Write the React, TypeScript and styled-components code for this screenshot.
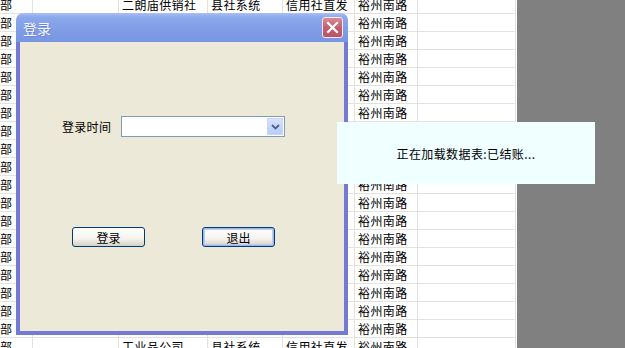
import styled, { createGlobalStyle } from 'styled-components';

const GlobalStyle = createGlobalStyle`
  html, body {
    margin: 0;
    padding: 0;
    overflow: hidden;
  }
  body {
    font-family: 'SimSun', 'Noto Sans CJK SC', sans-serif;
    font-size: 12px;
    color: #000;
  }
`;

const columns = [33, 86, 89, 75, 72, 63, 98];

// rows hidden behind the dialog keep only the visible columns
const hiddenRow = (street: string) => ['部', '', '', '', '', street, ''];

const rows: string[][] = [
  ['部', '', '二朗庙供销社', '县社系统', '信用社直发', '裕州南路', ''],
  ...Array.from({ length: 18 }, (_, i) => hiddenRow(i >= 6 && i <= 8 ? '' : '裕州南路')),
  ['部', '', '工业品公司', '县社系统', '信用社直发', '裕州南路', ''],
];

export default function App() {
  return (
    <>
      <GlobalStyle />
      <Screen>
        <Sheet>
          {rows.map((row, i) => (
            <Row key={i}>
              {row.map((text, j) => (
                <Cell key={j} first={j === 0}>
                  {text}
                </Cell>
              ))}
            </Row>
          ))}
        </Sheet>

        {/* Login dialog */}
        <Dialog>
          <TitleBar>
            <Title>登录</Title>
            <CloseButton>
              <svg width="13" height="13" viewBox="0 0 13 13">
                <path d="M2 2 L11 11 M11 2 L2 11" stroke="#fff" strokeWidth="2.2" strokeLinecap="square" />
              </svg>
            </CloseButton>
          </TitleBar>
          <Body>
            <FieldRow>
              <Label>登录时间</Label>
              <Combo>
                <ComboArrow>
                  <svg width="9" height="6" viewBox="0 0 9 6">
                    <path d="M1 1 L4.5 4.5 L8 1" stroke="#4d6185" strokeWidth="1.8" fill="none" />
                  </svg>
                </ComboArrow>
              </Combo>
            </FieldRow>
            <ButtonRow>
              <Button>登录</Button>
              <Button focused>退出</Button>
            </ButtonRow>
          </Body>
        </Dialog>

        {/* Loading notice */}
        <Loading>正在加载数据表:已结账...</Loading>
      </Screen>
    </>
  );
}

const Screen = styled.div`
  position: relative;
  width: 625px;
  height: 348px;
  display: flex;
  background: #808080;
  overflow: hidden;
`;

const Sheet = styled.div`
  width: 517px;
  height: 348px;
  background: #fff;
  overflow: hidden;
  display: flex;
  flex-direction: column;
`;

const Row = styled.div`
  display: grid;
  grid-template-columns: ${columns.map((c) => `${c}px`).join(' ')};
  height: 18px;
  flex: none;
  &:first-child {
    margin-top: -4px;
  }
`;

const Cell = styled.div<{ first: boolean }>`
  box-sizing: border-box;
  height: 18px;
  line-height: 17px;
  padding-left: ${(p) => (p.first ? '0' : '3px')};
  border-right: 1px solid #e4e2dc;
  border-bottom: 1px solid #e4e2dc;
  white-space: nowrap;
  overflow: hidden;
  font-size: 12px;
  letter-spacing: 0.4px;
`;

const Dialog = styled.div`
  position: absolute;
  left: 16px;
  top: 13px;
  width: 332px;
  height: 322px;
  display: flex;
  flex-direction: column;
`;

const TitleBar = styled.div`
  height: 29px;
  flex: none;
  display: flex;
  align-items: center;
  justify-content: space-between;
  padding: 0 5px 0 7px;
  border-radius: 7px 7px 0 0;
  background: linear-gradient(#a9c0f4 0%, #8ca8ec 15%, #7f9ce6 60%, #7896e2 100%);
`;

const Title = styled.span`
  color: #f4f7ff;
  font-size: 14px;
  text-shadow: 1px 1px 0 #6f86c9;
`;

const CloseButton = styled.div`
  width: 19px;
  height: 19px;
  display: flex;
  align-items: center;
  justify-content: center;
  border: 1px solid #f3e9ef;
  border-radius: 3px;
  background: linear-gradient(#d98b96, #c55f70 50%, #b95266);
`;

const Body = styled.div`
  flex: 1;
  background: #ece9d8;
  border: 4px solid #7379d4;
  border-top: none;
  display: flex;
  flex-direction: column;
  padding: 74px 0 0 0;
`;

const FieldRow = styled.div`
  display: flex;
  align-items: center;
  padding-left: 42px;
  height: 21px;
`;

const Label = styled.span`
  width: 59px;
  font-size: 12px;
  letter-spacing: 0.3px;
`;

const Combo = styled.div`
  box-sizing: border-box;
  width: 164px;
  height: 21px;
  background: #fff;
  border: 1px solid #7f9db9;
  display: flex;
  justify-content: flex-end;
  padding: 1px;
`;

const ComboArrow = styled.div`
  width: 16px;
  height: 17px;
  display: flex;
  align-items: center;
  justify-content: center;
  background: linear-gradient(#d6e2fd, #b9cdf8);
  border: 1px solid #c8d7f7;
  box-sizing: border-box;
`;

const ButtonRow = styled.div`
  display: flex;
  gap: 57px;
  padding-left: 52px;
  margin-top: 90px;
`;

const Button = styled.div<{ focused?: boolean }>`
  box-sizing: border-box;
  width: 73px;
  height: 20px;
  display: flex;
  align-items: center;
  justify-content: center;
  font-size: 12px;
  border: 1px solid #003c74;
  border-radius: 3px;
  background: linear-gradient(#ffffff, #f4f3ee 60%, #d6d0c5);
  box-shadow: ${(p) => (p.focused ? 'inset 0 0 0 1px #9db6ea, inset 0 0 0 2px #bccdf1' : 'none')};
`;

const Loading = styled.div`
  position: absolute;
  left: 337px;
  top: 122px;
  width: 258px;
  height: 62px;
  background: #f0ffff;
  display: flex;
  align-items: center;
  justify-content: center;
  font-size: 12px;
  letter-spacing: 0.4px;
  padding-top: 1px;
  box-sizing: border-box;
`;
